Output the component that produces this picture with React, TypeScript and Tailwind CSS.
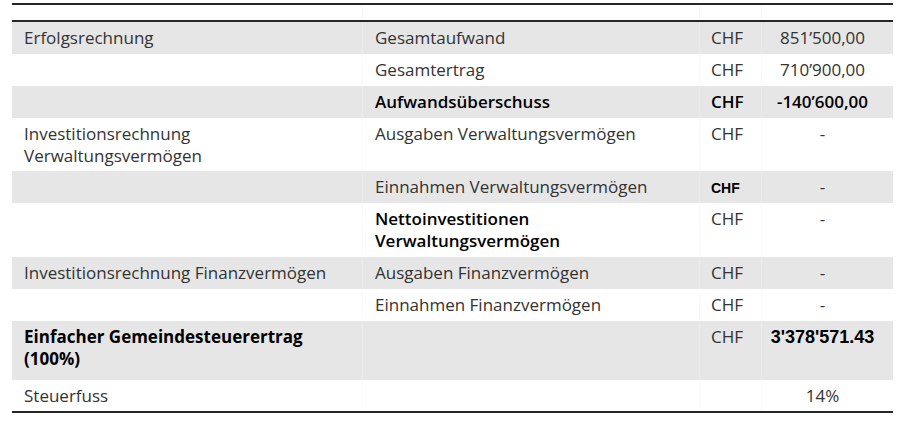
import React from "react";

type Row = {
  a?: React.ReactNode;
  b?: React.ReactNode;
  c?: React.ReactNode;
  d?: React.ReactNode;
  gray: boolean;
  h: string;
  aBold?: boolean;
  bBold?: boolean;
  cBold?: boolean;
  dBold?: boolean;
  dArial?: boolean;
};

const rows: Row[] = [
  { a: "Erfolgsrechnung", b: "Gesamtaufwand", c: "CHF", d: "851’500,00", gray: true, h: "h-[32px]" },
  { b: "Gesamtertrag", c: "CHF", d: "710’900,00", gray: false, h: "h-[32px]" },
  { b: "Aufwandsüberschuss", c: "CHF", d: "-140’600,00", gray: true, h: "h-[32px]", bBold: true, cBold: true, dBold: true },
  { a: <>Investitionsrechnung<br />Verwaltungsvermögen</>, b: "Ausgaben Verwaltungsvermögen", c: "CHF", d: "-", gray: false, h: "h-[53px]" },
  { b: "Einnahmen Verwaltungsvermögen", c: "CHFB", d: "-", gray: true, h: "h-[32px]" },
  { b: <>Nettoinvestitionen<br />Verwaltungsvermögen</>, c: "CHF", d: "-", gray: false, h: "h-[54px]", bBold: true },
  { a: "Investitionsrechnung Finanzvermögen", b: "Ausgaben Finanzvermögen", c: "CHF", d: "-", gray: true, h: "h-[32px]" },
  { b: "Einnahmen Finanzvermögen", c: "CHF", d: "-", gray: false, h: "h-[32px]" },
  { a: <>Einfacher Gemeindesteuerertrag<br />(100%)</>, c: "CHF", d: "3'378'571.43", gray: true, h: "h-[59px]", aBold: true, dArial: true },
  { a: "Steuerfuss", d: "14%", gray: false, h: "h-[31px]" },
];

export default function App() {
  return (
    <div
      className="w-[907px] h-[423px] bg-white pt-[3px] pl-[12px]"
      style={{ fontFamily: "'Open Sans', sans-serif" }}
    >
      <div className="w-[881px]">
        <div className="h-[19px] border-t-2 border-b-2 border-[#262626] grid grid-cols-[351px_337px_62px_131px]">
          <div className="border-r border-[#f7f7f7]" />
          <div className="border-r border-[#f7f7f7]" />
          <div className="border-r border-[#f7f7f7]" />
          <div />
        </div>
        {rows.map((r, i) => (
          <div
            key={i}
            className={`grid grid-cols-[351px_337px_62px_131px] ${r.h} ${r.gray ? "bg-[#e6e6e6]" : "bg-white"} text-[17px] leading-[22px] text-[#333333]`}
          >
            <div className={`pl-[12px] pt-[5px] border-r ${r.gray ? "border-[#ebebeb]" : "border-[#f9f9f9]"} ${r.aBold ? "font-bold text-black" : ""}`}>
              {r.a}
            </div>
            <div className={`pl-[12px] pt-[5px] border-r ${r.gray ? "border-[#ebebeb]" : "border-[#f9f9f9]"} ${r.bBold ? "font-semibold text-black" : ""}`}>
              {r.b}
            </div>
            <div className={`pl-[11px] pt-[5px] border-r ${r.gray ? "border-[#ebebeb]" : "border-[#f9f9f9]"} ${r.cBold ? "font-semibold text-black" : ""}`}>
              {r.c === "CHFB" ? (
                <span className="text-[14px] font-bold text-black" style={{ fontFamily: "'Liberation Sans', sans-serif" }}>CHF</span>
              ) : (
                r.c
              )}
            </div>
            <div className={`pt-[5px] text-center pr-[10px] ${r.dBold ? "font-semibold text-black" : ""}`}>
              {r.dArial ? (
                <span className="font-bold text-black text-[18px]" style={{ fontFamily: "'Liberation Sans', sans-serif" }}>{r.d}</span>
              ) : (
                r.d
              )}
            </div>
          </div>
        ))}
        <div className="border-t-2 border-[#262626]" />
      </div>
    </div>
  );
}
